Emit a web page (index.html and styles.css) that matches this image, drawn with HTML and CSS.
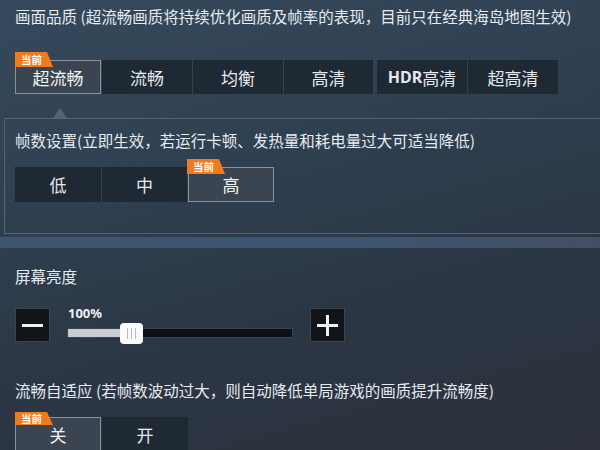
FILE: index.html
```html
<!doctype html>
<html>
<head>
  <meta charset='utf-8'>
  <title>画面设置</title>
  <link rel="stylesheet" href="styles.css">
</head>
<body>
<div id='main'>
  <div class='sec quality'>
    <p class='title'>画面品质 (超流畅画质将持续优化画质及帧率的表现，目前只在经典海岛地图生效)</p>
    <div class='badge-row'><span class='badge'>当前</span></div>
    <div class='tabs'>
      <span class='tab on w86'>超流畅</span>
      <span class='tab'>流畅</span>
      <span class='tab'>均衡</span>
      <span class='tab w89'>高清</span>
      <span class='tab sep'><b>HDR</b>高清</span>
      <span class='tab'>超高清</span>
    </div>
    <div class='arrow'></div>
  </div>

  <div class='panel'>
    <p class='title'>帧数设置(立即生效，若运行卡顿、发热量和耗电量过大可适当降低)</p>
    <div class='badge-row'><span class='badge off2'>当前</span></div>
    <div class='tabs small'>
      <span class='tab w86'>低</span>
      <span class='tab w85'>中</span>
      <span class='tab on w86'>高</span>
    </div>
  </div>
  <div class='strip'></div>

  <div class='sec'>
    <p class='title t2'>屏幕亮度</p>
    <div class='bright'>
      <span class='btn'><i class='minus'></i></span>
      <div class='slider'>
        <span class='pct'>100%</span>
        <div class='track'>
          <div class='fill'></div>
          <span class='thumb'><i></i><i></i><i></i></span>
        </div>
      </div>
      <span class='btn'><i class='minus'></i><i class='vert'></i></span>
    </div>
  </div>

  <div class='sec'>
    <p class='title t3'>流畅自适应 (若帧数波动过大，则自动降低单局游戏的画质提升流畅度)</p>
    <div class='badge-row b3'><span class='badge'>当前</span></div>
    <div class='tabs'>
      <span class='tab on w86'>关</span>
      <span class='tab w86'>开</span>
    </div>
  </div>
</div>
</body>
</html>
```

FILE: styles.css
```css
*{margin:0;padding:0;box-sizing:border-box;}
body{width:600px;height:450px;overflow:hidden;background:#2c3948;font-family:"Noto Sans CJK SC","Noto Sans",sans-serif;color:#e3e8ed;}
#main{width:600px;height:450px;overflow:hidden;background:linear-gradient(165deg,#36495c 0%,#2f4051 35%,#2b3645 65%,#2c313b 100%);}
.sec{padding-left:15px;}
.title{font-size:15.5px;line-height:20px;white-space:nowrap;color:#e6ebf0;}
.quality .title{padding-top:6px;}
.badge-row{height:15px;margin-top:19px;}
.badge{display:inline-block;height:15px;width:38px;padding-left:6px;font-size:10.5px;font-weight:700;line-height:15px;color:#fff;background:#f07a1c;clip-path:polygon(0 0,32px 0,38px 100%,0 100%);}
.tabs{display:flex;gap:1px;height:34px;}
.tab{width:90px;height:100%;background:#1f2934;color:#e4e8ec;font-size:17px;display:flex;align-items:center;justify-content:center;}
.tab b{font-family:"Noto Sans","DejaVu Sans",sans-serif;font-weight:700;font-size:16px;}
.tab.on{background:#3a4551;border:1px solid #86929e;color:#f2f4f6;}
.tab.w86{width:86px;}
.tab.w85{width:85px;}
.tab.w89{width:89px;}
.tab.sep{margin-left:3px;}
.arrow{width:0;height:0;margin:14px 0 0 38px;border-left:7px solid transparent;border-right:7px solid transparent;border-bottom:10px solid #56636f;}
.panel{margin:0 -10px 0 4px;height:116px;border:1px solid #56636f;padding:11px 0 0 10px;}
.panel .badge-row{margin-top:2px;}
.panel .tabs{height:35px;}
.badge.off2{margin-left:172px;}
.strip{height:11px;margin-top:3px;background:linear-gradient(90deg,#3c5672,#3d5570 60%,#454e66);}
.t2{padding-top:18px;}
.bright{display:flex;gap:17px;margin-top:22px;height:34px;}
.btn{position:relative;width:35px;height:34px;background:#111519;border:1px solid #3b4550;}
.btn i{position:absolute;background:#eef0f2;}
.btn .minus{left:6px;top:15px;width:21px;height:3px;}
.btn .vert{left:15px;top:6px;width:3px;height:21px;}
.slider{width:226px;display:flex;flex-direction:column;}
.pct{font-family:"Noto Sans",sans-serif;font-weight:700;font-size:13px;line-height:16px;margin:-3px 0 0 1px;color:#f0f2f4;}
.track{position:relative;height:10px;margin-top:7px;background:#0d1115;border:1px solid #3a434d;}
.fill{width:58px;height:100%;background:#c9cdd1;}
.thumb{position:absolute;left:52px;top:-6px;width:23px;height:21px;background:#fafafa;border-radius:4px;display:flex;justify-content:center;align-items:center;gap:3px;}
.thumb i{width:1px;height:11px;background:#b8bcc0;}
.t3{padding-top:38px;}
.b3{margin-top:4px;height:13px;}
.b3 .badge{height:13px;line-height:13px;}
```
